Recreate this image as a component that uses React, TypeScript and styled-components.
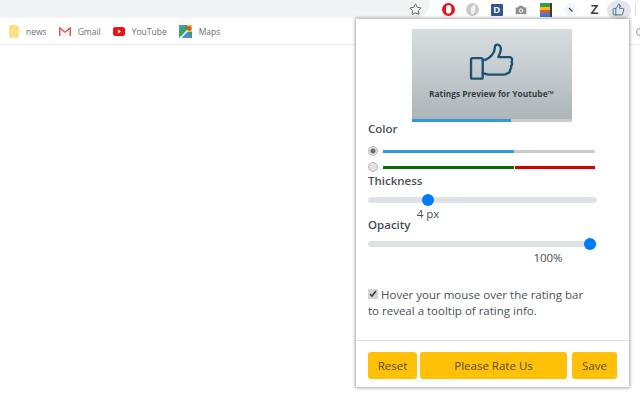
import * as React from "react";
import styled, { createGlobalStyle } from "styled-components";
import { Star, Camera, ThumbsUp } from "lucide-react";

const Global = createGlobalStyle`
	html, body {
		margin: 0;
		padding: 0;
		width: 640px;
		height: 400px;
		overflow: hidden;
		background: #fff;
		font-family: "Open Sans", "Noto Sans", sans-serif;
	}
`;

const bookmarks = [
	{ label: "news", icon: <FolderIcon /> },
	{ label: "Gmail", icon: <GmailIcon /> },
	{ label: "YouTube", icon: <YoutubeIcon /> },
	{ label: "Maps", icon: <MapsIcon /> },
];

export default function App() {
	return (
		<Page>
			<Global />
			<TopBar>
				<Omnibox>
					<Star size={13} color="#5f6368" strokeWidth={1.8} />
				</Omnibox>
				<Extensions>
					<ExtSlot><OperaIcon /></ExtSlot>
					<ExtSlot><GreyDiscIcon /></ExtSlot>
					<ExtSlot><DBadge>D</DBadge></ExtSlot>
					<ExtSlot><Camera size={14} color="#fff" fill="#8d9093" strokeWidth={1.6} /></ExtSlot>
					<ExtSlot><StripesIcon /></ExtSlot>
					<ExtSlot><PenIcon /></ExtSlot>
					<ExtSlot><ZGlyph>Z</ZGlyph></ExtSlot>
					<ExtSlot $active><ThumbsUp size={13} color="#4a7298" strokeWidth={1.8} /></ExtSlot>
				</Extensions>
				<ToolbarDivider />
			</TopBar>
			<BookmarkBar>
				{bookmarks.map((item) => (
					<Bookmark key={item.label}>
						{item.icon}
						<span>{item.label}</span>
					</Bookmark>
				))}
				<ClippedBookmark />
			</BookmarkBar>
			<Popup>
				<PopupBody>
					<Preview>
						<PreviewArt>
							<ThumbArt />
							<PreviewTitle>Ratings Preview for Youtube™</PreviewTitle>
						</PreviewArt>
						<BarTrack $color="#cccccc">
							<BarFill $color="#3498db" style={{ width: "62%" }} />
						</BarTrack>
					</Preview>
					<Label>Color</Label>
					<ColorRow $first>
						<Radio type="radio" name="color" defaultChecked />
						<ColorBar $color="#cccccc">
							<BarFill $color="#3498db" style={{ width: "61.8%" }} />
						</ColorBar>
					</ColorRow>
					<ColorRow>
						<Radio type="radio" name="color" />
						<ColorBar $color="#d30000">
							<BarFill $color="#0b6a00" $gap style={{ width: "62.2%" }} />
						</ColorBar>
					</ColorRow>
					<SliderLabel $offset={-2}>Thickness</SliderLabel>
					<Slider type="range" min={1} max={13} defaultValue={4} readOnly />
					<SliderValue $center={60}>4 px</SliderValue>
					<SliderLabel $offset={-4}>Opacity</SliderLabel>
					<Slider type="range" min={0} max={100} step={0.1} defaultValue={99.5} readOnly />
					<SliderValue $center={180}>100%</SliderValue>
					<Hint>
						<HintCheck type="checkbox" defaultChecked readOnly />
						Hover your mouse over the rating bar
						<br />
						to reveal a tooltip of rating info.
					</Hint>
				</PopupBody>
				<Footer>
					<ActionButton $width={49}>Reset</ActionButton>
					<ActionButton $width={147}>Please Rate Us</ActionButton>
					<ActionButton $width={45} $gapBefore>Save</ActionButton>
				</Footer>
			</Popup>
		</Page>
	);
}

function FolderIcon() {
	return (
		<svg width="10" height="13" viewBox="0 0 10 13">
			<path d="M0 1.5A1.5 1.5 0 0 1 1.5 0H8l2 2v9.5A1.5 1.5 0 0 1 8.5 13h-7A1.5 1.5 0 0 1 0 11.5z" fill="#fbe08a" />
		</svg>
	);
}

function GmailIcon() {
	return (
		<svg width="12" height="9" viewBox="0 0 12 9">
			<rect x="0" y="0" width="12" height="9" fill="#f3f3f3" />
			<path d="M.7 9V1l5.3 4.2L11.3 1v8" fill="none" stroke="#d9544a" strokeWidth="1.4" />
		</svg>
	);
}

function YoutubeIcon() {
	return (
		<svg width="12" height="9" viewBox="0 0 12 9">
			<rect width="12" height="9" rx="2.5" fill="#ee0f0f" />
			<path d="M4.8 2.6v3.800L8 4.500z" fill="#fff" />
		</svg>
	);
}

function MapsIcon() {
	return (
		<svg width="13" height="13" viewBox="0 0 13 13">
			<rect width="13" height="13" fill="#35a853" />
			<path d="M0 13 13 0v3L3 13z" fill="#f2f2f2" />
			<path d="M0 0h6L0 6z" fill="#4c8bf0" />
			<path d="M3 13 8 7l5 6z" fill="#4c8bf0" />
			<path d="M8 0h5v7H10z" fill="#e2c13b" />
			<circle cx="10" cy="3.5" r="2.3" fill="#d9483b" />
		</svg>
	);
}

function OperaIcon() {
	return (
		<svg width="13" height="13" viewBox="0 0 13 13">
			<circle cx="6.5" cy="6.5" r="6.5" fill="#e8141c" />
			<path d="M4 4l1-1.8h3L9.3 4v4.2L8 10.6H5L4 8.5z" fill="#fff" />
		</svg>
	);
}

function GreyDiscIcon() {
	return (
		<svg width="13" height="13" viewBox="0 0 13 13">
			<circle cx="6.5" cy="6.5" r="6.5" fill="#c9c9c9" />
			<path d="M9 1.5C6 2 4.5 4.5 4.8 8c.1 1.5.7 2.7 1.7 3.500C9 10 10 7.5 9 1.5z" fill="#f1f1f1" />
		</svg>
	);
}

function StripesIcon() {
	return (
		<svg width="12" height="14" viewBox="0 0 12 14">
			<rect width="10" height="4" fill="#3c9a4a" />
			<rect y="4" width="10" height="3" fill="#f2c21c" />
			<rect y="7" width="10" height="3" fill="#e2562f" />
			<rect y="10" width="10" height="4" fill="#3f7ee0" />
			<rect x="10" width="2" height="14" fill="#3d3d3d" />
		</svg>
	);
}

function PenIcon() {
	return (
		<svg width="13" height="13" viewBox="0 0 13 13">
			<circle cx="6.5" cy="6.5" r="6.5" fill="#f3f5f8" />
			<path d="M5 5l3.5 3.5" stroke="#33507f" strokeWidth="1.3" />
		</svg>
	);
}

function ThumbArt() {
	return (
		<svg width="46" height="39" viewBox="0 0 46 40" fill="none" stroke="#1d5271" strokeWidth="2.4" strokeLinejoin="round" strokeLinecap="round">
			<rect x="1.5" y="15.5" width="12" height="21" rx="1.5" />
			<path d="M13.5 18c5-1 9.5-5 11.5-9 1-2 .5-5 1.5-6.5 1.5-1.500 5-1 5.500 2.500.5 3.500-1.500 7-2.500 9.500h11c2.500 0 3.500 1.500 3 3.500l-.5 1.500c1 1 1 3-.5 4 .5 1.500.1 3-1 3.800.2 2-.8 3.500-2.700 3.700-1 1.500-2.500 1.500-4 1.500H20c-2.500 0-4-1-6.500-1.500" />
		</svg>
	);
}

const Page = styled.div`
	position: relative;
	width: 640px;
	height: 400px;
	background: #fff;
	overflow: hidden;
`;

const TopBar = styled.div`
	height: 19px;
	background: #fff;
	display: flex;
	align-items: flex-end;
	padding-right: 4px;
	box-sizing: border-box;
`;

const Omnibox = styled.div`
	flex: 1;
	height: 28px;
	margin-right: 5.5px;
	margin-bottom: 1px;
	border-radius: 0 14px 14px 0;
	background: #f1f3f4;
	display: flex;
	align-items: flex-end;
	justify-content: flex-end;
	padding: 0 8px 2px 0;
	box-sizing: border-box;
`;

const Extensions = styled.div`
	display: flex;
	align-items: center;
	height: 19px;
`;

const ExtSlot = styled.div<{ $active?: boolean }>`
	width: 24.4px;
	height: 20px;
	display: flex;
	align-items: center;
	justify-content: center;
	border-radius: 50%;
	flex: none;
	background: ${(p) => (p.$active ? "#e3e5e8" : "transparent")};
`;

const ToolbarDivider = styled.div`
	width: 1px;
	height: 14px;
	margin: 0 0 3px 4px;
	background: #dadce0;
	flex: none;
`;

const DBadge = styled.div`
	width: 12px;
	height: 12px;
	background: #33558f;
	color: #fff;
	font: bold 9px "Liberation Sans", sans-serif;
	display: flex;
	align-items: center;
	justify-content: center;
	border-radius: 1px;
`;

const ZGlyph = styled.div`
	font: bold 13px "Liberation Sans", sans-serif;
	color: #3c3c3c;
`;

const BookmarkBar = styled.div`
	height: 25px;
	border-bottom: 1px solid #eeeff0;
	display: flex;
	align-items: center;
	gap: 12px;
	padding-left: 9px;
	background: #fff;
`;

const Bookmark = styled.div`
	display: flex;
	align-items: center;
	gap: 7px;
	font-size: 8.5px;
	color: #6b6f73;
`;

const ClippedBookmark = styled.div`
	width: 8px;
	height: 8px;
	margin-left: auto;
	margin-right: -4px;
	border: 1px solid #7d9cc4;
	border-radius: 50%;
	box-sizing: border-box;
	flex: none;
`;

const Popup = styled.div`
	position: absolute;
	left: 356px;
	top: 19px;
	width: 273px;
	height: 368px;
	background: #fff;
	box-shadow: 0 0 3px 1px rgba(0, 0, 0, 0.35);
	display: flex;
	flex-direction: column;
	color: #495057;
`;

const PopupBody = styled.div`
	flex: 1;
	padding: 10px 0 0 12px;
	border-bottom: 1px solid #dee2e6;
	display: flex;
	flex-direction: column;
	align-items: flex-start;
`;

const Preview = styled.div`
	width: 160px;
	height: 93px;
	align-self: center;
	margin-left: -14px;
	display: flex;
	flex-direction: column;
`;

const PreviewArt = styled.div`
	flex: 1;
	background: linear-gradient(#d8dee0, #aeb5b9);
	display: flex;
	flex-direction: column;
	align-items: center;
	padding-top: 14px;
	box-sizing: border-box;
`;

const PreviewTitle = styled.div`
	font-size: 8.4px;
	font-weight: 700;
	color: #3a4043;
	margin-top: 6px;
	white-space: nowrap;
`;

const BarTrack = styled.div<{ $color: string }>`
	height: 3px;
	width: 100%;
	flex: none;
	background: ${(p) => p.$color};
`;

const ColorBar = styled(BarTrack)`
	width: auto;
	flex: 1;
`;

const BarFill = styled.div<{ $color: string; $gap?: boolean }>`
	height: 100%;
	background: ${(p) => p.$color};
	border-right: ${(p) => (p.$gap ? "1px solid #fff" : "none")};
	box-sizing: border-box;
`;

const Label = styled.div`
	font-size: 11.5px;
	font-weight: 600;
	line-height: 16px;
	margin-top: -1px;
`;

const SliderLabel = styled(Label)<{ $offset: number }>`
	margin-top: ${(p) => p.$offset}px;
`;

const ColorRow = styled.div<{ $first?: boolean }>`
	display: flex;
	align-items: center;
	gap: 5px;
	width: 227px;
	height: 16px;
	margin-top: ${(p) => (p.$first ? "6px" : "0")};
`;

const Radio = styled.input`
	-webkit-appearance: none;
	appearance: none;
	width: 10px;
	height: 10px;
	margin: 0;
	flex: none;
	border: 1px solid #b8b8b8;
	border-radius: 50%;
	background: #e2e2e2;
	box-sizing: border-box;
	&:checked {
		background: radial-gradient(circle, #6a6a6a 0 2px, #e2e2e2 3px);
	}
`;

const Slider = styled.input`
	-webkit-appearance: none;
	appearance: none;
	width: 229px;
	height: 12px;
	margin: 5px 0 0;
	background: transparent;
	&::-webkit-slider-runnable-track {
		height: 6px;
		border-radius: 3px;
		background: #dee2e6;
	}
	&::-webkit-slider-thumb {
		-webkit-appearance: none;
		width: 12px;
		height: 12px;
		margin-top: -3px;
		border-radius: 50%;
		background: #007bff;
	}
`;

const SliderValue = styled.div<{ $center: number }>`
	font-size: 11.5px;
	line-height: 15px;
	width: 229px;
	text-align: center;
	transform: translateX(${(p) => p.$center - 114.5}px);
`;

const Hint = styled.div`
	font-size: 11.5px;
	line-height: 16px;
	margin-top: 22px;
`;

const HintCheck = styled.input`
	width: 10px;
	height: 10px;
	margin: 0 3px 0 0;
	accent-color: #d4d4d4;
`;

const Footer = styled.div`
	height: 46px;
	flex: none;
	display: flex;
	align-items: flex-start;
	gap: 3px;
	padding: 11px 0 0 12px;
	box-sizing: border-box;
`;

const ActionButton = styled.div<{ $width: number; $gapBefore?: boolean }>`
	height: 27px;
	width: ${(p) => p.$width}px;
	margin-left: ${(p) => (p.$gapBefore ? "2px" : "0")};
	background: #ffc107;
	border-radius: 3px;
	color: #5a4a1a;
	font-size: 11.5px;
	display: flex;
	align-items: center;
	justify-content: center;
`;
